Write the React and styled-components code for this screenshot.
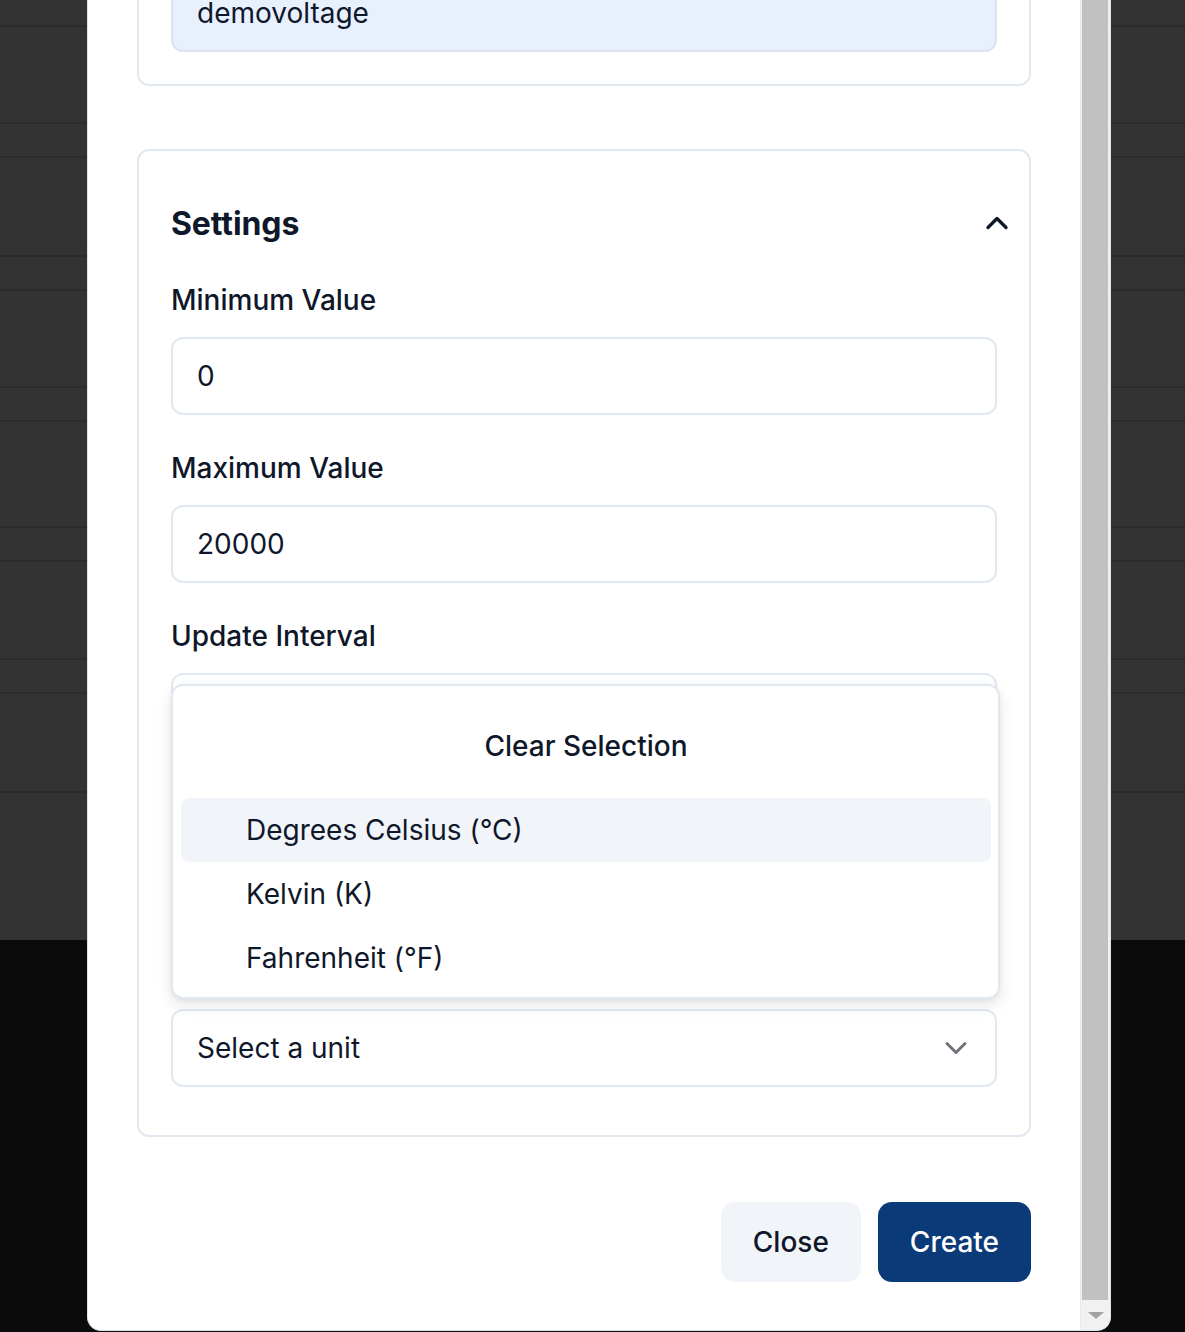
import React from "react";
import styled, { createGlobalStyle } from "styled-components";
import { ChevronUp, ChevronDown } from "lucide-react";

const GlobalStyle = createGlobalStyle`
  html, body {
    margin: 0;
    padding: 0;
    height: 100%;
    overflow: hidden;
    background: #0b0b0b;
  }
  body {
    font-family: Inter, "Noto Sans", sans-serif;
    color: #0f172a;
  }
  * { box-sizing: border-box; }
`;

/* page behind the dialog, dimmed */
const Backdrop = styled.div`
  display: flex;
  flex-direction: column;
  background: #333333;
  height: 940px;
`;

const BackRow = styled.div`
  height: ${(p) => p.$h}px;
  border-bottom: ${(p) => (p.$last ? "none" : "2px solid #2b2b2b")};
`;

const Modal = styled.div`
  position: fixed;
  left: 87px;
  top: 0;
  width: 1024px;
  height: 1331px;
  display: flex;
  background: #ffffff;
  border: 1px solid #dde3ec;
  border-top: none;
  border-radius: 0 0 14px 14px;
  overflow: hidden;
`;

const ScrollArea = styled.div`
  flex: 1;
  overflow: hidden;
  padding: 0 49px;
`;

const Content = styled.div`
  margin-top: -117px;
  display: flex;
  flex-direction: column;
`;

const Card = styled.section`
  border: 2px solid #e2e8f0;
  border-radius: 12px;
  padding: ${(p) => (p.$roomy ? "48px 32px" : "32px")};
  display: flex;
  flex-direction: column;
  gap: 33px;
  margin-bottom: ${(p) => p.$mb || 0}px;
`;

const Header = styled.div`
  display: flex;
  align-items: center;
  justify-content: space-between;
  height: 48px;
`;

const Title = styled.h2`
  margin: 0;
  font-size: 32px;
  font-weight: 700;
  letter-spacing: -0.1px;
`;

const IconButton = styled.span`
  display: flex;
  margin-right: -18px;
  color: #0f172a;
`;

const Field = styled.div`
  display: flex;
  flex-direction: column;
`;

const Label = styled.label`
  font-size: 28px;
  font-weight: 500;
  line-height: 40px;
  margin-bottom: 17px;
`;

const SelectWrap = styled.div`
  position: relative;
`;

const Input = styled.div`
  height: 78px;
  border: 2px solid ${(p) => (p.$filled ? "#dbe4f0" : "#e2e8f0")};
  background: ${(p) => (p.$filled ? "#e8f0fe" : "#ffffff")};
  border-radius: 12px;
  padding: 0 24px;
  display: flex;
  align-items: center;
  justify-content: space-between;
  font-size: 28px;
  color: #0f172a;
`;

const Caret = styled.span`
  display: flex;
  margin-right: -3px;
  color: #71717a;
`;

const Menu = styled.div`
  position: absolute;
  left: 0;
  right: -3px;
  bottom: calc(100% + 10px);
  z-index: 2;
  background: #ffffff;
  border: 2px solid #e2e8f0;
  border-radius: 12px;
  padding: 8px 7px 7px 8px;
  box-shadow: 0 6px 16px rgba(15, 23, 42, 0.1), 0 2px 4px rgba(15, 23, 42, 0.05);
  display: flex;
  flex-direction: column;
`;

const ClearRow = styled.div`
  height: 104px;
  display: flex;
  align-items: center;
  justify-content: center;
  font-size: 28px;
  font-weight: 500;
`;

const Option = styled.div`
  height: 64px;
  display: flex;
  align-items: center;
  padding-left: 65px;
  border-radius: 8px;
  font-size: 28px;
  background: ${(p) => (p.$active ? "#f1f4f9" : "transparent")};
`;

const Footer = styled.div`
  display: flex;
  justify-content: flex-end;
  gap: 17px;
  margin-top: 65px;
`;

const Button = styled.button`
  height: 80px;
  padding: 0 32px;
  border: none;
  border-radius: 14px;
  font-family: inherit;
  font-size: 28px;
  font-weight: 500;
  cursor: pointer;
  background: ${(p) => (p.$primary ? "#0b3a78" : "#f1f4f8")};
  color: ${(p) => (p.$primary ? "#ffffff" : "#0f172a")};
`;

const Track = styled.div`
  width: 30px;
  display: flex;
  flex-direction: column;
  background: #f1f1f1;
  border-left: 1px solid #e8e8e8;
`;

const Thumb = styled.div`
  flex: 1;
  margin: 0 2px 0 1px;
  background: #c1c1c1;
`;

const Arrow = styled.div`
  height: 30px;
  display: flex;
  align-items: center;
  justify-content: center;
  &::after {
    content: "";
    border-left: 8px solid transparent;
    border-right: 8px solid transparent;
    border-top: 7px solid #a3a3a3;
  }
`;

const rows = [27, 97, 34, 99, 34, 97, 34, 106, 34, 98, 34, 99, 147];
const units = ["Degrees Celsius (°C)", "Kelvin (K)", "Fahrenheit (°F)"];

const App = () => {
  return (
    <>
      <GlobalStyle />
      <Backdrop>
        {rows.map((h, i) => (
          <BackRow key={i} $h={h} $last={i === rows.length - 1} />
        ))}
      </Backdrop>

      <Modal>
        <ScrollArea>
          <Content>
            <Card $mb={63}>
              <Field>
                <Label>Name</Label>
                <Input $filled>demovoltage</Input>
              </Field>
            </Card>

            <Card $roomy>
              <Header>
                <Title>Settings</Title>
                <IconButton>
                  <ChevronUp size={36} strokeWidth={2.2} />
                </IconButton>
              </Header>
              <Field>
                <Label>Minimum Value</Label>
                <Input>0</Input>
              </Field>
              <Field>
                <Label>Maximum Value</Label>
                <Input>20000</Input>
              </Field>
              <Field>
                <Label>Update Interval</Label>
                <Input>
                  <span />
                  <Caret><ChevronDown size={36} strokeWidth={2} /></Caret>
                </Input>
              </Field>
              <Field>
                <Label>Icon</Label>
                <Input />
              </Field>
              <Field>
                <Label>Unit</Label>
                <SelectWrap>
                  <Input>
                    Select a unit
                    <Caret><ChevronDown size={36} strokeWidth={2} /></Caret>
                  </Input>
                  <Menu>
                    <ClearRow>Clear Selection</ClearRow>
                    {units.map((u, i) => (
                      <Option key={u} $active={i === 0}>{u}</Option>
                    ))}
                  </Menu>
                </SelectWrap>
              </Field>
            </Card>

            <Footer>
              <Button>Close</Button>
              <Button $primary>Create</Button>
            </Footer>
          </Content>
        </ScrollArea>
        <Track>
          <Thumb />
          <Arrow />
        </Track>
      </Modal>
    </>
  );
};

export default App;
